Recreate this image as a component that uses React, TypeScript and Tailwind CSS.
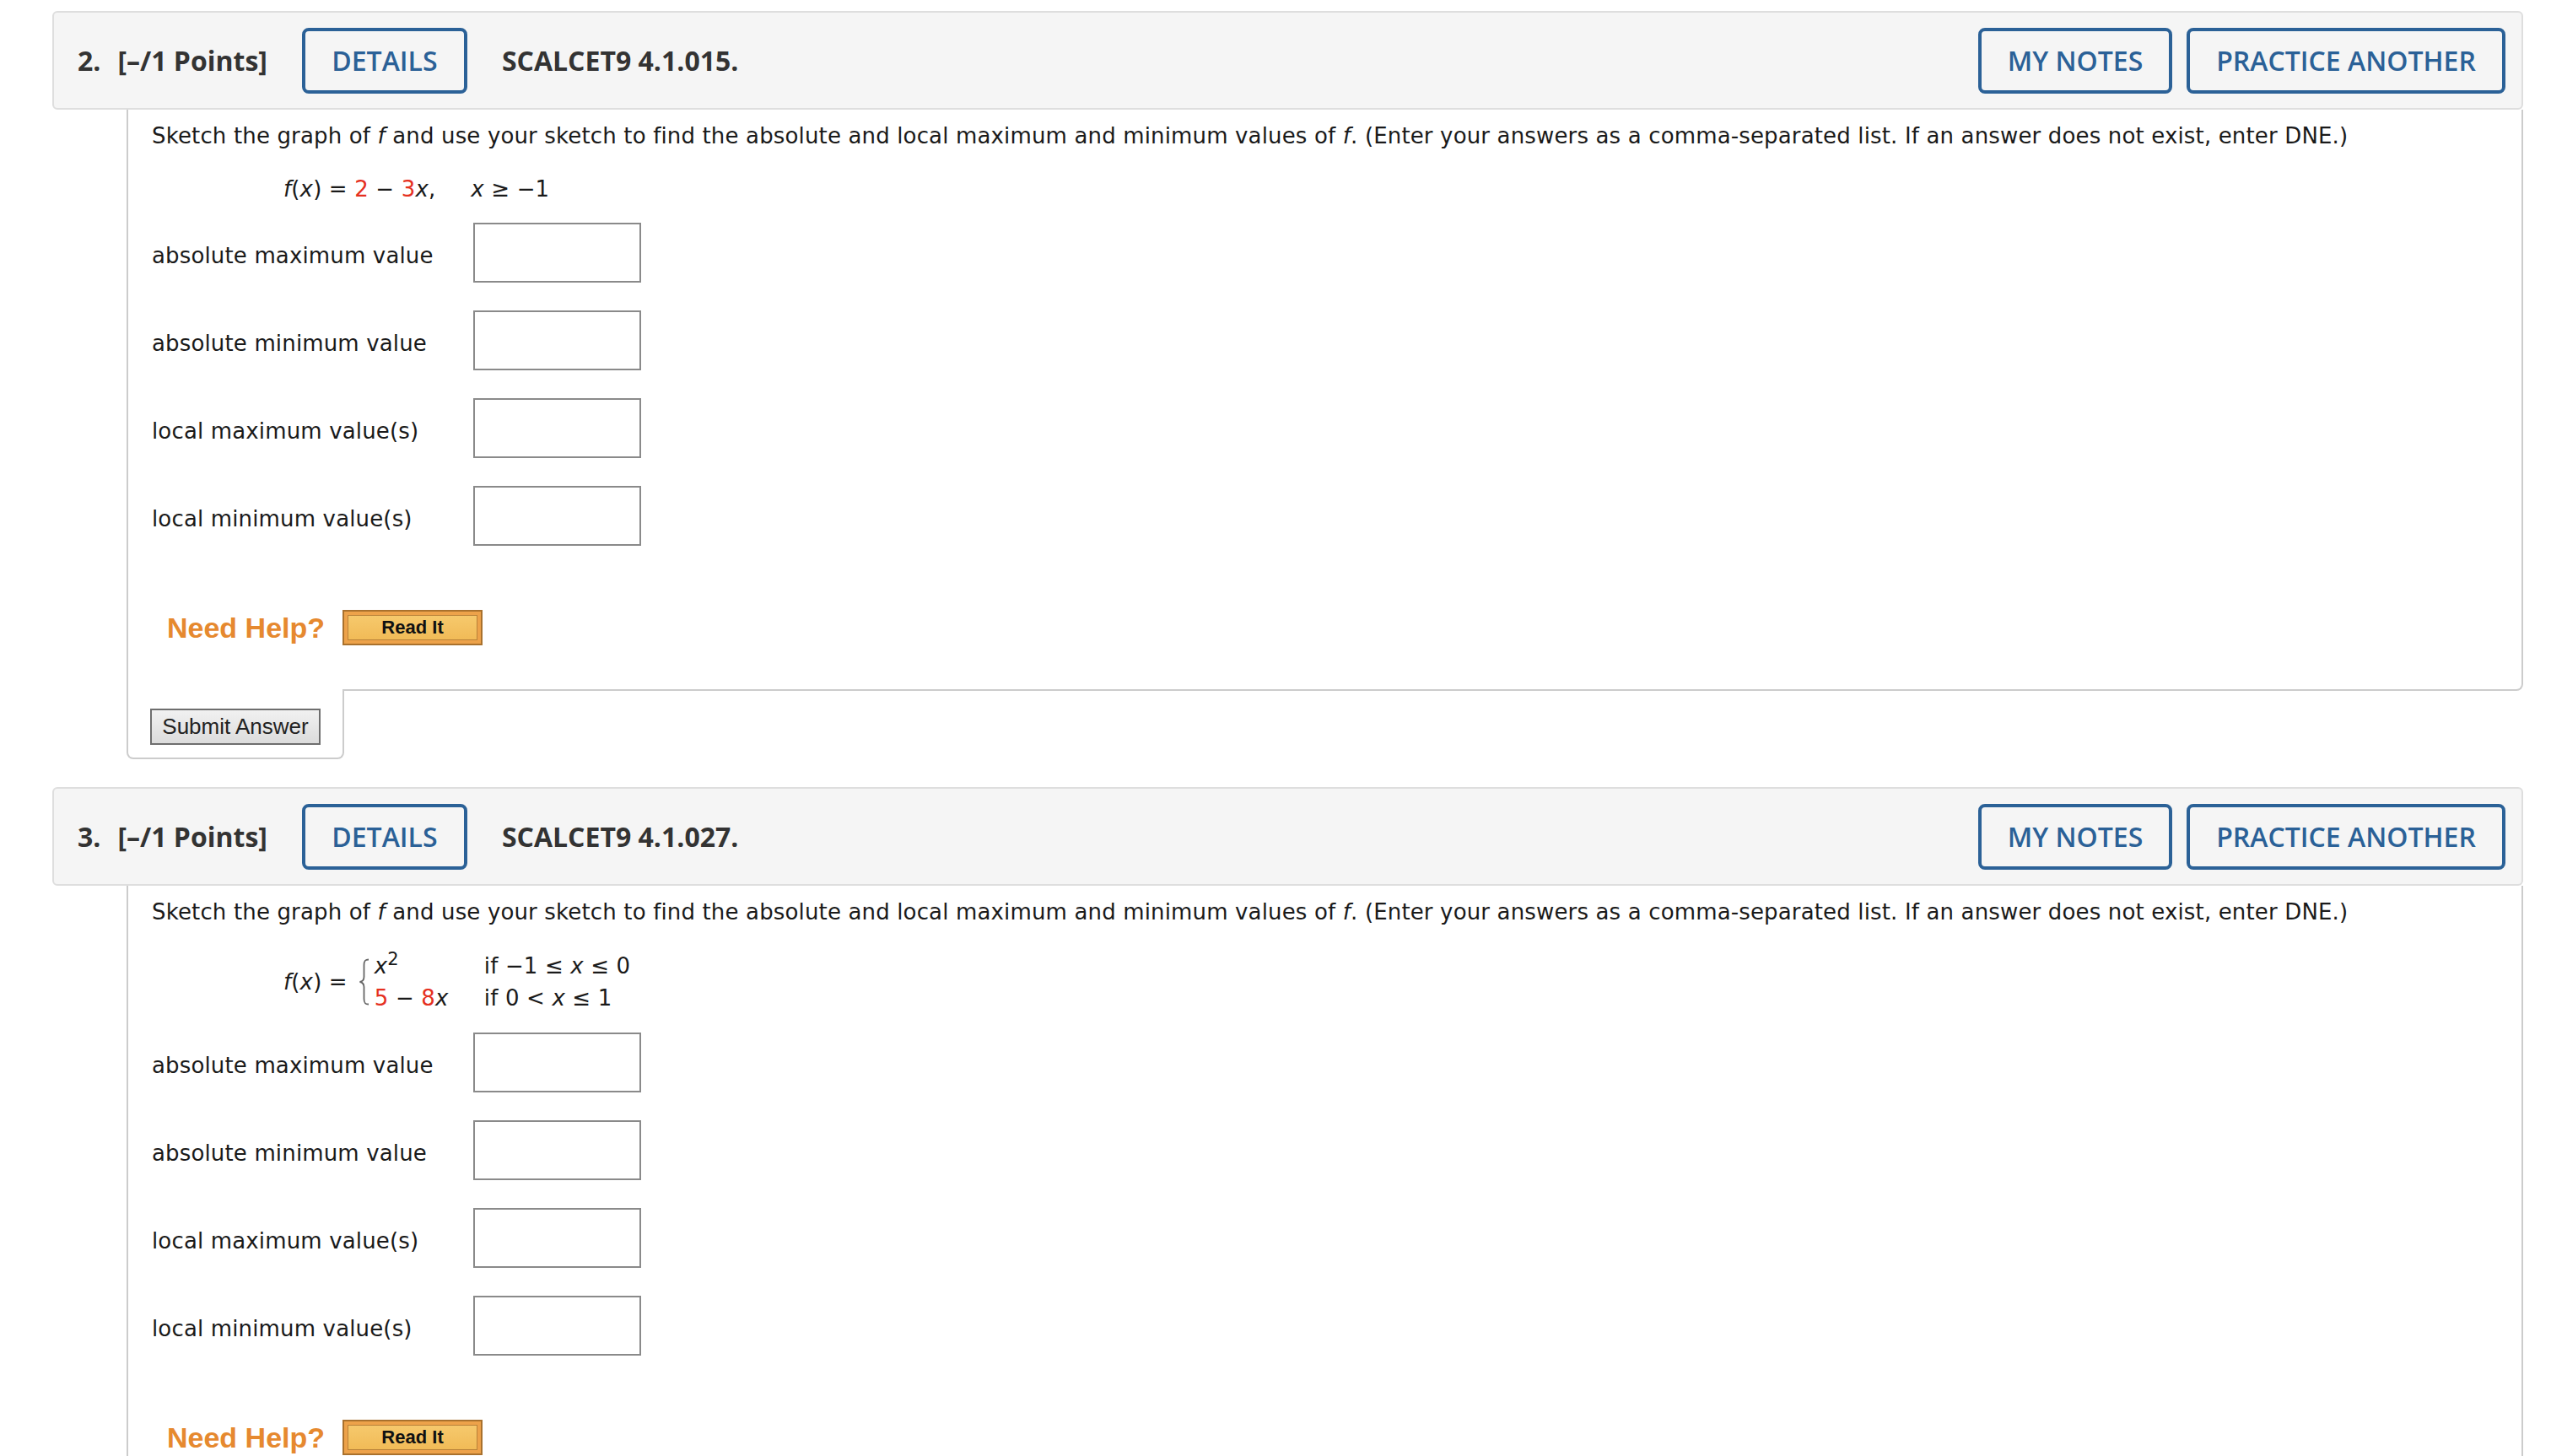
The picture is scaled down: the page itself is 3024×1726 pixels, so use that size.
import React from 'react';

const labels = [
  'absolute maximum value',
  'absolute minimum value',
  'local maximum value(s)',
  'local minimum value(s)',
];

function HeaderButton({ label, width }: { label: string; width: string }) {
  return (
    <button
      className={`${width} h-[78px] border-[4px] border-[#2b6197] rounded-[8px] text-[#2b6197] font-semibold flex items-center justify-center`}
    >
      {label}
    </button>
  );
}

function QuestionHeader({ num, code }: { num: number; code: string }) {
  return (
    <div className="flex items-center h-[117px] bg-[#f5f5f5] border-2 border-[#dedede] rounded-[6px] pl-[28px] pr-[19px] font-['Open_Sans',sans-serif] text-[32px]">
      <span className="font-bold text-[#333333]">{num}.</span>
      <span className="ml-[20px] font-bold text-[#333333]">[–/1 Points]</span>
      <div className="ml-[41px]">
        <HeaderButton label="DETAILS" width="w-[196px]" />
      </div>
      <span className="ml-[41px] font-bold text-[#333333]">{code}</span>
      <div className="ml-auto flex gap-[17px]">
        <HeaderButton label="MY NOTES" width="w-[230px]" />
        <HeaderButton label="PRACTICE ANOTHER" width="w-[378px]" />
      </div>
    </div>
  );
}

function Red({ children }: { children: React.ReactNode }) {
  return <span className="text-[#e5301f]">{children}</span>;
}

function AnswerRows() {
  return (
    <div className="mt-[22px] flex flex-col gap-[33px]">
      {labels.map((label) => (
        <div key={label} className="flex items-center h-[71px]">
          <span className="w-[381px] pt-[6px]">{label}</span>
          <div className="w-[199px] h-[71px] border-2 border-[#8a8a8a] bg-white" />
        </div>
      ))}
    </div>
  );
}

function NeedHelp() {
  return (
    <div className="mt-[76px] ml-[18px] flex items-center gap-[21px]">
      <span className="font-['Liberation_Sans',Arial,sans-serif] font-bold text-[34px] text-[#e6892f] leading-none tracking-normal">
        Need Help?
      </span>
      <div className="w-[166px] h-[42px] border-2 border-[#a9712d] bg-[#eda24a] p-[4px]">
        <div className="h-full border border-[#b98139] bg-gradient-to-b from-[#f6c96c] to-[#f1bb57] flex items-center justify-center font-['Liberation_Sans',Arial,sans-serif] font-bold text-[22px] tracking-normal text-[#111111]">
          Read It
        </div>
      </div>
    </div>
  );
}

function Question({
  num,
  code,
  formula,
}: {
  num: number;
  code: string;
  formula: React.ReactNode;
}) {
  return (
    <section>
      <QuestionHeader num={num} code={code} />
      <div className="ml-[88px]">
        <div className="border-2 border-t-0 border-[#cccccc] rounded-br-[8px] pl-[28px] pt-[13px] pb-[52px] font-['DejaVu_Sans',Verdana,sans-serif] text-[26px] leading-[36px] tracking-[0.15px] text-[#1a1a1a]">
          <p>
            Sketch the graph of <i>f</i> and use your sketch to find the absolute and local maximum and
            minimum values of <i>f</i>. (Enter your answers as a comma-separated list. If an answer does
            not exist, enter DNE.)
          </p>
          <div className="mt-[27px] ml-[156px]">{formula}</div>
          <AnswerRows />
          <NeedHelp />
        </div>
        <div className="-mt-[2px] w-[258px] bg-white border-2 border-t-0 border-[#cccccc] rounded-b-[8px] pl-[26px] pt-[23px] pb-[15px]">
          <button className="w-[202px] h-[43px] border-2 border-[#6e6e6e] bg-gradient-to-b from-[#f1f1f1] to-[#dcdcdc] font-['Liberation_Sans',Arial,sans-serif] text-[26px] text-[#222222] flex items-center justify-center">
            Submit Answer
          </button>
        </div>
      </div>
    </section>
  );
}

const linearFormula = (
  <div className="h-[36px] flex items-center">
    <span>
      <i>f</i>(<i>x</i>) = <Red>2</Red> − <Red>3</Red>
      <i>x</i>,
    </span>
    <span className="ml-[42px]">
      <i>x</i> ≥ −1
    </span>
  </div>
);

const piecewiseFormula = (
  <div className="h-[76px] flex items-center">
    <span>
      <i>f</i>(<i>x</i>) =
    </span>
    <svg className="ml-[13px]" width="14" height="56" viewBox="0 0 14 56">
      <path
        d="M12 1.5 C7.5 1.5 6.5 3.5 6.5 8 L6.5 22 C6.5 25.5 4.5 27.5 1.5 28 C4.5 28.5 6.5 30.5 6.5 34 L6.5 48 C6.5 52.5 7.5 54.5 12 54.5"
        fill="none"
        stroke="#666666"
        strokeWidth="1.8"
      />
    </svg>
    <div className="ml-[5px] grid grid-cols-[130px_auto] leading-[38px]">
      <span>
        <i>x</i>
        <sup className="text-[21px]">2</sup>
      </span>
      <span>
        if −1 ≤ <i>x</i> ≤ 0
      </span>
      <span>
        <Red>5</Red> − <Red>8</Red>
        <i>x</i>
      </span>
      <span>
        if 0 &lt; <i>x</i> ≤ 1
      </span>
    </div>
  </div>
);

export default function App() {
  return (
    <div className="min-h-screen bg-white pt-[13px] pl-[62px] pr-[33px] pb-[40px]">
      <div className="flex flex-col gap-[33px]">
        <Question num={2} code="SCALCET9 4.1.015." formula={linearFormula} />
        <Question num={3} code="SCALCET9 4.1.027." formula={piecewiseFormula} />
      </div>
    </div>
  );
}
